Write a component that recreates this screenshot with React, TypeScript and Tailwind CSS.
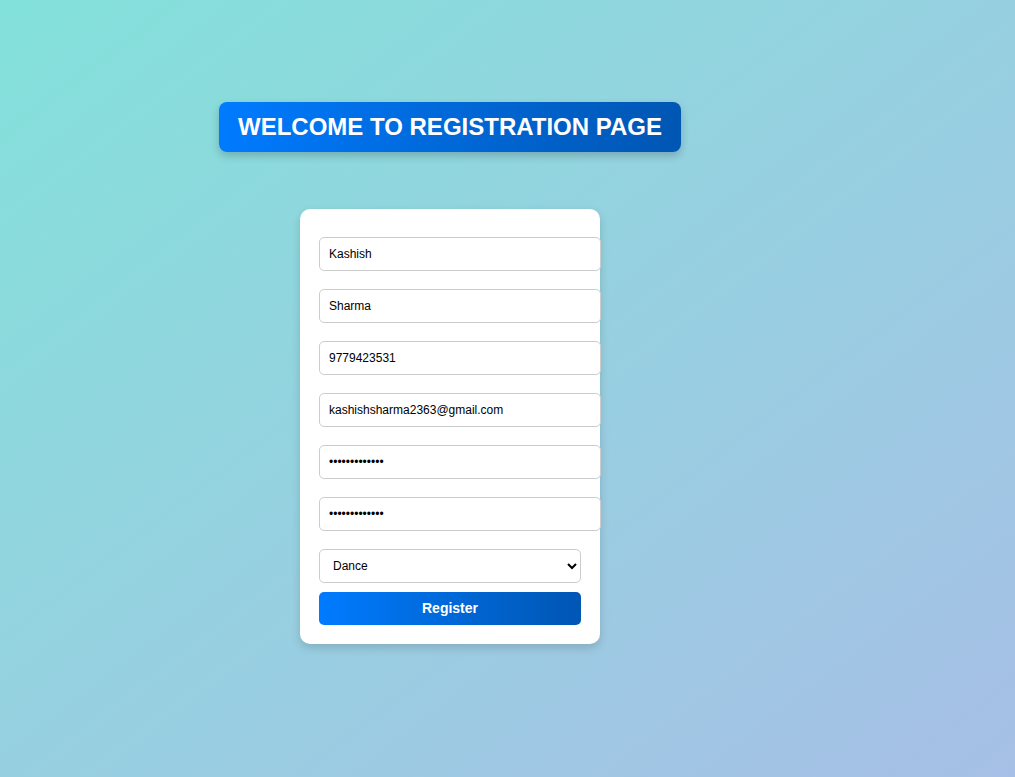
import React from 'react';

const fieldClass =
  'block w-[282px] h-[34px] pl-[9px] pr-[11px] border border-[#cccccc] rounded-[5px] bg-white text-[12px] text-black outline-none';

export default function App() {
  return (
    <div
      className="min-h-[777px] w-full bg-gradient-to-br from-[#82e1da] to-[#a6bfe6]"
      style={{ fontFamily: '"Liberation Sans", Arial, sans-serif' }}
    >
      <div className="w-[900px] pt-[102px] flex flex-col items-center">
        {/* Title */}
        <h1 className="h-[50px] px-[19px] flex items-center rounded-[8px] bg-gradient-to-r from-[#007bff] to-[#0056b3] text-white text-[24px] font-bold shadow-[0_4px_8px_rgba(0,0,0,0.2)]">
          WELCOME TO REGISTRATION PAGE
        </h1>

        {/* Form card */}
        <form className="mt-[57px] w-[300px] bg-white rounded-[10px] px-[19px] pt-[28px] pb-[19px] shadow-[0_4px_10px_rgba(0,0,0,0.15)]">
          <input className={fieldClass} defaultValue="Kashish" />
          <input className={`${fieldClass} mt-[18px]`} defaultValue="Sharma" />
          <input className={`${fieldClass} mt-[18px]`} defaultValue="9779423531" />
          <input className={`${fieldClass} mt-[18px]`} defaultValue="kashishsharma2363@gmail.com" />
          <input type="password" className={`${fieldClass} mt-[18px]`} defaultValue="kashish123456" />
          <input type="password" className={`${fieldClass} mt-[18px]`} defaultValue="kashish123456" />
          <select
            className="block mt-[18px] w-[262px] h-[34px] px-[9px] border border-[#cccccc] rounded-[5px] bg-white text-[12px] text-black outline-none"
            defaultValue="Dance"
          >
            <option>Dance</option>
            <option>Music</option>
            <option>Sports</option>
          </select>
          <button
            type="button"
            className="block mt-[9px] w-[262px] h-[33px] rounded-[5px] bg-gradient-to-r from-[#007bff] to-[#0056b3] text-white text-[14px] font-bold"
          >
            Register
          </button>
        </form>
      </div>
    </div>
  );
}
